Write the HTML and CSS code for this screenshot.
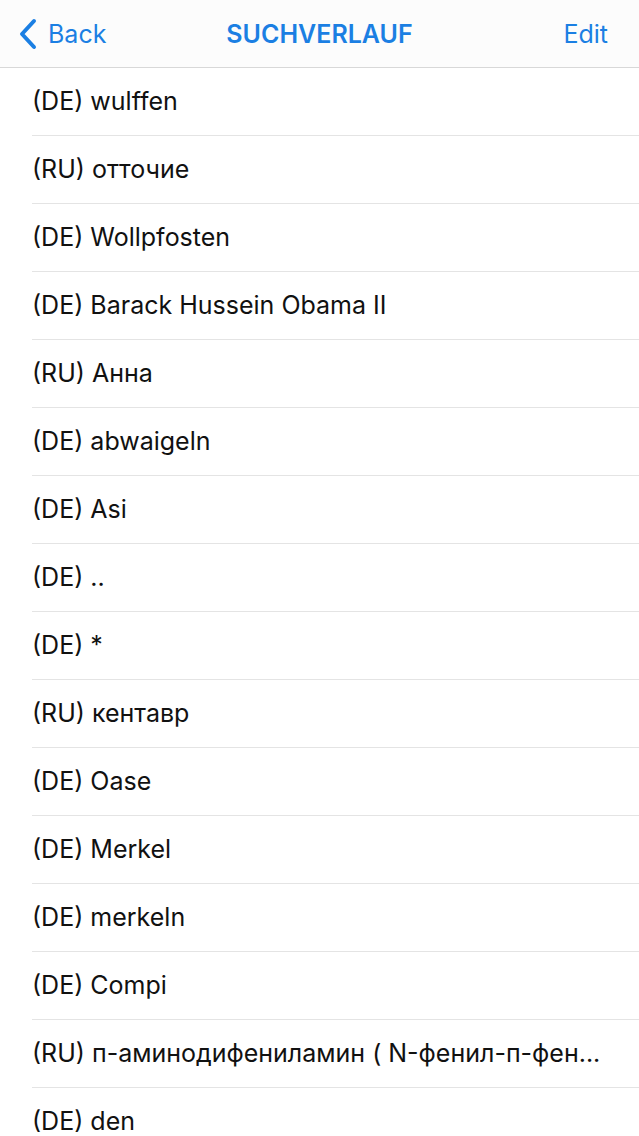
FILE: index.html
```html
<!DOCTYPE html>
<html lang="de">
<head>
    <meta charset="UTF-8">
    <title>Suchverlauf</title>
    <link rel="stylesheet" href="styles.css">
</head>
<body>
<div class="navbar">
    <a class="nav-back" href="#">
        <svg class="chevron" width="20" height="32" viewBox="0 0 20 32">
            <path d="M16 3 L4 16 L16 29" fill="none" stroke="currentColor" stroke-width="4" stroke-linecap="round" stroke-linejoin="round"/>
        </svg>
        <span>Back</span>
    </a>
    <div class="nav-title">SUCHVERLAUF</div>
    <a class="nav-edit" href="#">Edit</a>
</div>

<ul class="history">
    <li>(DE) wulffen</li>
    <li>(RU) отточие</li>
    <li>(DE) Wollpfosten</li>
    <li>(DE) Barack Hussein Obama II</li>
    <li>(RU) Анна</li>
    <li>(DE) abwaigeln</li>
    <li>(DE) Asi</li>
    <li>(DE) ..</li>
    <li>(DE) *</li>
    <li>(RU) кентавр</li>
    <li>(DE) Oase</li>
    <li>(DE) Merkel</li>
    <li>(DE) merkeln</li>
    <li>(DE) Compi</li>
    <li>(RU) п-аминодифениламин ( N-фенил-п-фен...</li>
    <li>(DE) den</li>
</ul>
</body>
</html>
```

FILE: styles.css
```css
* {
    box-sizing: border-box;
    font-family: 'Inter', 'Roboto', sans-serif;
}

html, body {
    margin: 0;
    padding: 0;
    height: 100%;
    overflow: hidden;
    background: #fff;
}

.navbar {
    height: 68px;
    display: flex;
    align-items: center;
    justify-content: space-between;
    padding: 0 31px 0 18px;
    background: #fcfcfc;
    border-bottom: 1px solid #d8d8d8;
    color: #1b7fe3;
    font-size: 25px;
    position: relative;
}

.navbar a {
    color: inherit;
    text-decoration: none;
}

.nav-back {
    display: flex;
    align-items: center;
    gap: 10px;
}

.nav-title {
    position: absolute;
    left: 0;
    right: 0;
    text-align: center;
    font-weight: 600;
    pointer-events: none;
}

.history {
    list-style: none;
    margin: 0;
    padding: 0 0 0 32px;
}

.history li {
    height: 68px;
    line-height: 67px;
    font-size: 25px;
    color: #111;
    border-bottom: 1px solid #e4e4e4;
    padding-right: 20px;
    white-space: nowrap;
    overflow: hidden;
    text-overflow: ellipsis;
}
```
